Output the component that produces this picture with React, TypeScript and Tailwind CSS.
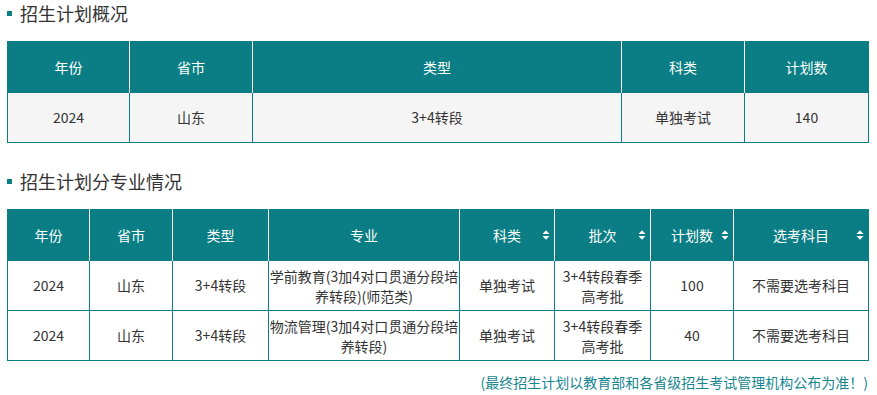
import React from "react";

const FONT = { fontFamily: '"Noto Sans CJK SC", "Noto Sans", sans-serif' };

function SortIcon() {
  return (
    <svg
      viewBox="0 0 8 12"
      className="absolute right-[4px] top-1/2 h-[12px] w-[8px] -translate-y-1/2"
      fill="#fff"
    >
      <path d="M0.5 5 L4 1.2 L7.5 5 Z" />
      <path d="M0.5 7 L7.5 7 L4 10.8 Z" />
    </svg>
  );
}

function Title({ children }: { children: React.ReactNode }) {
  return (
    <div className="flex h-[26px] items-center gap-[8px]">
      <span className="h-[5px] w-[5px] bg-[#0a7e84]" />
      <span className="text-[18px] leading-[26px] text-[#333]">{children}</span>
    </div>
  );
}

type Head = { label: string; w: number; sort?: boolean };

function Th({ h }: { h: Head }) {
  return (
    <th
      style={{ width: h.w }}
      className="relative h-[51px] border-x border-white p-0 text-center text-[14px] font-normal text-white first:border-l-[#0a7e84] last:border-r-[#0a7e84]"
    >
      {h.label}
      {h.sort && <SortIcon />}
    </th>
  );
}

const overview: Head[] = [
  { label: "年份", w: 122 },
  { label: "省市", w: 123 },
  { label: "类型", w: 369 },
  { label: "科类", w: 123 },
  { label: "计划数", w: 124 },
];

const majorsHead: Head[] = [
  { label: "年份", w: 82 },
  { label: "省市", w: 83 },
  { label: "类型", w: 96 },
  { label: "专业", w: 191 },
  { label: "科类", w: 95, sort: true },
  { label: "批次", w: 96, sort: true },
  { label: "计划数", w: 83, sort: true },
  { label: "选考科目", w: 135, sort: true },
];

const majors = [
  { major: ["学前教育(3加4对口贯通分段培", "养转段)(师范类)"], count: "100" },
  { major: ["物流管理(3加4对口贯通分段培", "养转段)"], count: "40" },
];

const td = "h-[50px] border border-[#0a7e84] p-0 text-center text-[14px] text-[#333]";

export default function App() {
  return (
    <div className="w-[877px] bg-white px-[7px]" style={FONT}>
      <Title>招生计划概况</Title>
      <table className="mt-[15px] w-[861px] table-fixed border-collapse border border-[#0a7e84]">
        <thead>
          <tr className="bg-[#0a7e84]">
            {overview.map((h) => (
              <Th key={h.label} h={h} />
            ))}
          </tr>
        </thead>
        <tbody>
          <tr className="bg-[#f5f5f5]">
            <td className={td}>2024</td>
            <td className={td}>山东</td>
            <td className={td}>3+4转段</td>
            <td className={td}>单独考试</td>
            <td className={td}>140</td>
          </tr>
        </tbody>
      </table>

      <div className="mt-[25px]">
        <Title>招生计划分专业情况</Title>
      </div>
      <table className="mt-[15px] w-[861px] table-fixed border-collapse border border-[#0a7e84]">
        <thead>
          <tr className="bg-[#0a7e84]">
            {majorsHead.map((h) => (
              <Th key={h.label} h={h} />
            ))}
          </tr>
        </thead>
        <tbody>
          {majors.map((m) => (
            <tr key={m.count} className="bg-white">
              <td className={td}>2024</td>
              <td className={td}>山东</td>
              <td className={td}>3+4转段</td>
              <td className={`${td} whitespace-nowrap leading-[20px]`}>
                {m.major[0]}
                <br />
                {m.major[1]}
              </td>
              <td className={td}>单独考试</td>
              <td className={`${td} leading-[20px]`}>
                3+4转段春季
                <br />
                高考批
              </td>
              <td className={td}>{m.count}</td>
              <td className={td}>不需要选考科目</td>
            </tr>
          ))}
        </tbody>
      </table>

      <p className="mt-[11px] w-[861px] text-right text-[14px] leading-[20px] text-[#17868f]">
        (最终招生计划以教育部和各省级招生考试管理机构公布为准！)
      </p>
    </div>
  );
}
